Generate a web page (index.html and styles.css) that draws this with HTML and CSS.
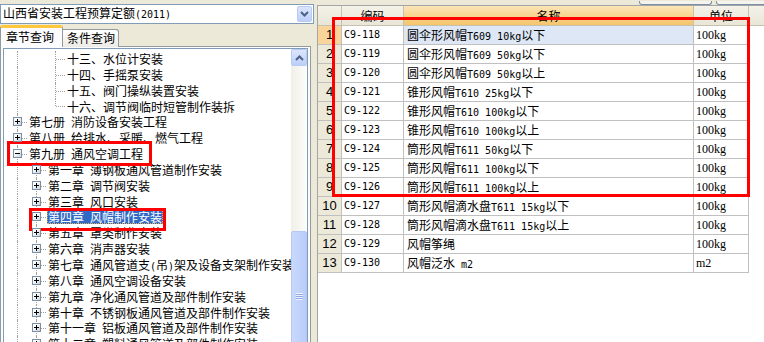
FILE: index.html
```html
<!DOCTYPE html>
<html>
  <head>
    <title>定额章节查询</title>
    <link rel="stylesheet" href="styles.css">
  </head>
  <body>
    <div class="app">
      <div class="left">
        <div class="combo">
          <span class="combo-text">山西省安装工程预算定额<span class="en">(2011)</span></span>
          <span class="combo-btn">
            <svg width="9" height="6" viewBox="0 0 9 6"><path d="M1 1l3.5 3.5L8 1" stroke="#4D6185" stroke-width="2" fill="none"/></svg>
          </span>
        </div>
        <div class="tabs">
          <div class="tab active">章节查询</div>
          <div class="tab">条件查询</div>
        </div>
        <div class="tab-panel">
          <div class="tree-box">
            <div class="tree">
              <div class="node"><i class="g v"></i><i class="g"></i><i class="g t"></i><span class="lbl">十三、水位计安装</span></div>
              <div class="node"><i class="g v"></i><i class="g"></i><i class="g t"></i><span class="lbl">十四、手摇泵安装</span></div>
              <div class="node"><i class="g v"></i><i class="g"></i><i class="g t"></i><span class="lbl">十五、阀门操纵装置安装</span></div>
              <div class="node"><i class="g v"></i><i class="g"></i><i class="g l"></i><span class="lbl">十六、调节阀临时短管制作装拆</span></div>
              <div class="node"><i class="g t"><b class="box plus"></b></i><span class="lbl">第七册&ensp;消防设备安装工程</span></div>
              <div class="node"><i class="g t"><b class="box plus"></b></i><span class="lbl">第八册&ensp;给排水、采暖、燃气工程</span></div>
              <div class="node"><i class="g t"><b class="box"></b></i><span class="lbl">第九册&ensp;通风空调工程</span></div>
              <div class="node"><i class="g v"></i><i class="g t"><b class="box plus"></b></i><span class="lbl">第一章&ensp;薄钢板通风管道制作安装</span></div>
              <div class="node"><i class="g v"></i><i class="g t"><b class="box plus"></b></i><span class="lbl">第二章&ensp;调节阀安装</span></div>
              <div class="node"><i class="g v"></i><i class="g t"><b class="box plus"></b></i><span class="lbl">第三章&ensp;风口安装</span></div>
              <div class="node"><i class="g v"></i><i class="g t"><b class="box plus"></b></i><span class="lbl sel">第四章&ensp;风帽制作安装</span></div>
              <div class="node"><i class="g v"></i><i class="g t"><b class="box plus"></b></i><span class="lbl">第五章&ensp;罩类制作安装</span></div>
              <div class="node"><i class="g v"></i><i class="g t"><b class="box plus"></b></i><span class="lbl">第六章&ensp;消声器安装</span></div>
              <div class="node"><i class="g v"></i><i class="g t"><b class="box plus"></b></i><span class="lbl">第七章&ensp;通风管道支<span class="en">(</span>吊<span class="en">)</span>架及设备支架制作安装</span></div>
              <div class="node"><i class="g v"></i><i class="g t"><b class="box plus"></b></i><span class="lbl">第八章&ensp;通风空调设备安装</span></div>
              <div class="node"><i class="g v"></i><i class="g t"><b class="box plus"></b></i><span class="lbl">第九章&ensp;净化通风管道及部件制作安装</span></div>
              <div class="node"><i class="g v"></i><i class="g t"><b class="box plus"></b></i><span class="lbl">第十章&ensp;不锈钢板通风管道及部件制作安装</span></div>
              <div class="node"><i class="g v"></i><i class="g t"><b class="box plus"></b></i><span class="lbl">第十一章&ensp;铝板通风管道及部件制作安装</span></div>
              <div class="node"><i class="g v"></i><i class="g t"><b class="box plus"></b></i><span class="lbl">第十二章&ensp;塑料通风管道及部件制作安装</span></div>
            </div>
            <div class="vscroll">
              <div class="sb-btn">
                <svg width="9" height="6" viewBox="0 0 9 6"><path d="M1 5l3.5-3.5L8 5" stroke="#4D6185" stroke-width="2" fill="none"/></svg>
              </div>
              <div class="sb-track">
                <div class="sb-thumb"><span class="grip"></span></div>
              </div>
            </div>
          </div>
        </div>
      </div>

      <div class="right">
        <div class="toolbar">
          <span class="tb-btn b1"></span>
          <span class="tb-btn b2"></span>
        </div>
        <div class="grid">
          <div class="hd"></div>
          <div class="hd">编码</div>
          <div class="hd hot">名称</div>
          <div class="hd">单位</div>
          <div class="hd fill"></div>

          <div class="num cur">1</div><div class="cell code">C9-118</div><div class="cell name cur">圆伞形风帽<span class="en">T609 10kg</span>以下</div><div class="cell unit">100kg</div><div class="fill"></div>
          <div class="num">2</div><div class="cell code">C9-119</div><div class="cell name">圆伞形风帽<span class="en">T609 50kg</span>以下</div><div class="cell unit">100kg</div><div class="fill"></div>
          <div class="num">3</div><div class="cell code">C9-120</div><div class="cell name">圆伞形风帽<span class="en">T609 50kg</span>以上</div><div class="cell unit">100kg</div><div class="fill"></div>
          <div class="num">4</div><div class="cell code">C9-121</div><div class="cell name">锥形风帽<span class="en">T610 25kg</span>以下</div><div class="cell unit">100kg</div><div class="fill"></div>
          <div class="num">5</div><div class="cell code">C9-122</div><div class="cell name">锥形风帽<span class="en">T610 100kg</span>以下</div><div class="cell unit">100kg</div><div class="fill"></div>
          <div class="num">6</div><div class="cell code">C9-123</div><div class="cell name">锥形风帽<span class="en">T610 100kg</span>以上</div><div class="cell unit">100kg</div><div class="fill"></div>
          <div class="num">7</div><div class="cell code">C9-124</div><div class="cell name">筒形风帽<span class="en">T611 50kg</span>以下</div><div class="cell unit">100kg</div><div class="fill"></div>
          <div class="num">8</div><div class="cell code">C9-125</div><div class="cell name">筒形风帽<span class="en">T611 100kg</span>以下</div><div class="cell unit">100kg</div><div class="fill"></div>
          <div class="num">9</div><div class="cell code">C9-126</div><div class="cell name">筒形风帽<span class="en">T611 100kg</span>以上</div><div class="cell unit">100kg</div><div class="fill"></div>
          <div class="num">10</div><div class="cell code">C9-127</div><div class="cell name">筒形风帽滴水盘<span class="en">T611 15kg</span>以下</div><div class="cell unit">100kg</div><div class="fill"></div>
          <div class="num">11</div><div class="cell code">C9-128</div><div class="cell name">筒形风帽滴水盘<span class="en">T611 15kg</span>以上</div><div class="cell unit">100kg</div><div class="fill"></div>
          <div class="num">12</div><div class="cell code">C9-129</div><div class="cell name">风帽筝绳</div><div class="cell unit">100kg</div><div class="fill"></div>
          <div class="num">13</div><div class="cell code">C9-130</div><div class="cell name">风帽泛水<span class="en"> m2</span></div><div class="cell unit">m2</div><div class="fill"></div>
        </div>
      </div>

      <!-- 标注框 -->
      <div class="mark m1"></div>
      <div class="mark m2"></div>
      <div class="mark m3"></div>
    </div>
  </body>
</html>
```

FILE: styles.css
```css
* {
  box-sizing: border-box;
}

body {
  margin: 0;
  background: #ece9d8;
  font-family: "Noto Sans CJK SC", "DejaVu Sans", sans-serif;
  font-size: 12px;
  color: #000;
  overflow: hidden;
}

.app {
  position: relative;
  display: flex;
  width: 764px;
  height: 342px;
  overflow: hidden;
}

.en {
  font-family: "DejaVu Sans Mono", monospace;
  font-size: 10px;
}

/* 左侧面板 */
.left {
  width: 314px;
  display: flex;
  flex-direction: column;
  padding-top: 4px;
}

.combo {
  display: flex;
  align-items: center;
  height: 20px;
  border: 1px solid #7f9db9;
  background: #fff;
  padding: 0 1px 0 2px;
}

.combo-text {
  flex: 1;
  line-height: 16px;
  white-space: nowrap;
}

.combo-btn {
  width: 15px;
  height: 16px;
  display: flex;
  align-items: center;
  justify-content: center;
  border: 1px solid #b9cbf3;
  border-radius: 2px;
  background: linear-gradient(#dbe6fd, #bccff9);
}

.tabs {
  display: flex;
  align-items: flex-end;
  height: 21px;
  margin-top: 2px;
  position: relative;
  z-index: 1;
  margin-bottom: -1px;
}

.tab {
  width: 56px;
  height: 18px;
  padding-left: 4px;
  line-height: 16px;
  border: 1px solid #919b9c;
  border-bottom: none;
  border-left: none;
  border-radius: 0 3px 0 0;
  background: linear-gradient(#fff, #ecebe6);
}

.tab.active {
  width: 63px;
  height: 22px;
  padding-left: 5px;
  line-height: 17px;
  border-left: 1px solid #919b9c;
  border-top: 3px solid #ffc83c;
  border-radius: 3px 3px 0 0;
  background: #fcfcfe;
}

.tab-panel {
  flex: 1;
  margin-right: 3px;
  border: 1px solid #919b9c;
  border-bottom: none;
  background: #fcfcfe;
  padding: 1px 2px 0 2px;
  display: flex;
  min-height: 0;
}

.tree-box {
  flex: 1;
  display: flex;
  border: 1px solid #7f9db9;
  border-bottom: none;
  background: #fff;
  overflow: hidden;
}

.tree {
  flex: 1;
  padding: 2px 0 0 4px;
  overflow: hidden;
}

.node {
  display: flex;
  height: 15.85px;
  white-space: nowrap;
}

.g {
  position: relative;
  flex: none;
  width: 19px;
}

.g.v::before,
.g.t::before,
.g.l::before {
  content: "";
  position: absolute;
  left: 9px;
  top: 0;
  bottom: 0;
  border-left: 1px dotted #a0a0a0;
}

.g.l::before {
  bottom: 50%;
}

.g.t::after,
.g.l::after {
  content: "";
  position: absolute;
  left: 10px;
  right: 0;
  top: 50%;
  border-top: 1px dotted #a0a0a0;
}

.box {
  position: absolute;
  left: 5px;
  top: 3px;
  width: 9px;
  height: 9px;
  border: 1px solid #7b8ea6;
  background: linear-gradient(135deg, #fff 30%, #c8d2dc);
  z-index: 1;
}

.box::before {
  content: "";
  position: absolute;
  left: 1px;
  top: 3px;
  width: 5px;
  height: 1px;
  background: #000;
}

.box.plus::after {
  content: "";
  position: absolute;
  left: 3px;
  top: 1px;
  width: 1px;
  height: 5px;
  background: #000;
}

.lbl {
  margin: 1px 0 0 1px;
  padding: 0 1px;
  height: 14px;
  line-height: 14px;
}

.lbl.sel {
  background: #316ac5;
  color: #fff;
  outline: 1px dotted #d8b060;
  outline-offset: -1px;
}

.vscroll {
  width: 16px;
  flex: none;
  display: flex;
  flex-direction: column;
  background: #f4f3ee;
}

.sb-btn {
  height: 17px;
  display: flex;
  align-items: center;
  justify-content: center;
  border: 1px solid #b9cbf3;
  border-radius: 2px;
  background: linear-gradient(#dbe6fd, #bccff9);
}

.sb-track {
  flex: 1;
  overflow: hidden;
  background: linear-gradient(90deg, #f0efe8, #fdfdfa);
}

.sb-thumb {
  margin-top: 165px;
  height: 130px;
  display: flex;
  align-items: center;
  justify-content: center;
  border: 1px solid #b6c9f6;
  border-radius: 2px;
  background: linear-gradient(90deg, #c9d8fc, #b9cdfa);
}

.grip {
  width: 7px;
  height: 7px;
  background: repeating-linear-gradient(#eef3fe 0 1px, #8da8e6 1px 2px);
}

/* 右侧定额列表 */
.right {
  flex: 1;
  display: flex;
  flex-direction: column;
  padding-left: 3px;
}

.toolbar {
  height: 5px;
  display: flex;
  align-items: flex-end;
  gap: 4px;
  padding-left: 322px;
  overflow: hidden;
}

.tb-btn {
  height: 4px;
  border: 1px solid #7a8fa8;
  border-top: none;
  border-radius: 0 0 3px 3px;
  background: #f4f3ee;
}

.b1 {
  width: 73px;
}

.b2 {
  flex: 1;
  margin-right: -4px;
}

.grid {
  flex: 1;
  display: grid;
  grid-template-columns: 24px 62px 290px 55px 1fr;
  grid-auto-rows: 19px;
  grid-template-rows: 20px;
  align-content: start;
  border-top: 1px solid #a5a5a5;
  border-left: 1px solid #a5a5a5;
  background: #fff;
  line-height: 18px;
  white-space: nowrap;
}

.hd {
  background: linear-gradient(#f4f2e9, #e9e6d8);
  border-right: 1px solid #c5c2b2;
  border-bottom: 1px solid #c5c2b2;
  text-align: center;
  line-height: 19px;
}

.hd.hot {
  background: linear-gradient(#fbe5b6, #f4c46b);
}

.hd.fill {
  border-right: none;
}

.num {
  background: #ece9d8;
  border-right: 1px solid #c0c0c0;
  border-bottom: 1px solid #c0c0c0;
  text-align: center;
  font-family: "Liberation Sans", sans-serif;
  font-size: 13px;
}

.num.cur {
  background: #fad59b;
}

.cell {
  border-right: 1px solid #c0c0c0;
  border-bottom: 1px solid #c0c0c0;
  padding-left: 2px;
  overflow: hidden;
}

.cell.name {
  padding-left: 3px;
}

.cell.name.cur {
  background: #dde7f5;
}

.code {
  font-family: "DejaVu Sans Mono", monospace;
  font-size: 10px;
}

.unit {
  font-family: "Liberation Serif", serif;
  font-size: 12px;
}

/* 红色标注框 */
.mark {
  position: absolute;
  border: 3px solid #f00;
  pointer-events: none;
}

.m1 {
  left: 7px;
  top: 141px;
  width: 145px;
  height: 25px;
}

.m2 {
  left: 29px;
  top: 208px;
  width: 137px;
  height: 23px;
}

.m3 {
  left: 332px;
  top: 17px;
  width: 418px;
  height: 180px;
}
```
